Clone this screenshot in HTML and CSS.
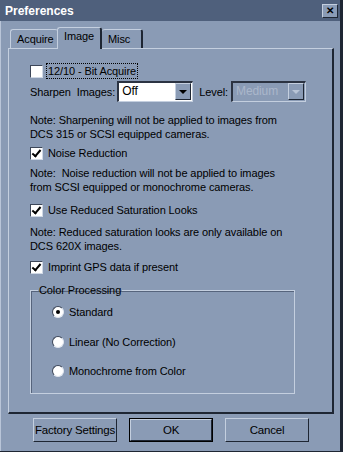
FILE: index.html
```html
<!DOCTYPE html>
<html lang="en">
  <head>
    <meta charset="UTF-8" />
    <title>Preferences</title>
    <link rel="stylesheet" href="styles.css">
  </head>
  <body>
    <div class="window">
      <!-- Title bar -->
      <div class="titlebar">
        <span class="title">Preferences</span>
        <span class="close">&#x2715;</span>
      </div>

      <!-- Tabs -->
      <div class="tabs">
        <div class="tab acquire">Acquire</div>
        <div class="tab active">Image</div>
        <div class="tab misc">Misc</div>
      </div>

      <div class="panel">
        <label class="check first"><span class="box"></span><span class="dotted">12/10 - Bit Acquire</span></label>

        <div class="sharpen-row">
          <span class="lbl">Sharpen&nbsp; Images:</span>
          <div class="combo">
            <span class="value">Off</span>
            <span class="arrow"><span class="tri"></span></span>
          </div>
          <span class="lbl level">Level:</span>
          <div class="combo disabled">
            <span class="value">Medium</span>
            <span class="arrow"><span class="tri"></span></span>
          </div>
        </div>

        <p class="note n1">Note: Sharpening will not be applied to images from<br>DCS 315 or SCSI equipped cameras.</p>

        <label class="check c2"><span class="box checked"></span>Noise Reduction</label>

        <p class="note n2">Note:&nbsp; Noise reduction will not be applied to images<br>from SCSI equipped or monochrome cameras.</p>

        <label class="check c3"><span class="box checked"></span>Use Reduced Saturation Looks</label>

        <p class="note n3">Note: Reduced saturation looks are only available on<br>DCS 620X images.</p>

        <label class="check c4"><span class="box checked"></span>Imprint GPS data if present</label>

        <fieldset class="group">
          <legend>Color Processing</legend>
          <label class="radio"><span class="dot on"></span>Standard</label>
          <label class="radio"><span class="dot"></span>Linear (No Correction)</label>
          <label class="radio"><span class="dot"></span>Monochrome from Color</label>
        </fieldset>
      </div>

      <div class="buttons">
        <div class="btn">Factory Settings</div>
        <div class="btn default"><span class="inner">OK</span></div>
        <div class="btn">Cancel</div>
      </div>
    </div>
  </body>
</html>
```

FILE: styles.css
```css
* {
  margin: 0;
  padding: 0;
  box-sizing: border-box;
}

body {
  font-family: "Liberation Sans", Arial, sans-serif;
  font-size: 11px;
  letter-spacing: -0.1px;
  color: #000;
  background: #8a9bb5;
}

.window {
  width: 343px;
  height: 452px;
  background: #8a9bb5;
  border-right: 3px solid #1e2633;
  border-bottom: 1px solid #1e2633;
  box-shadow: inset 1px 1px 0 #b9c5d8;
}

.titlebar {
  height: 21px;
  background: #4f607c;
  display: flex;
  align-items: center;
  justify-content: space-between;
  padding: 0 2px 0 5px;
}

.title {
  color: #fff;
  font-weight: bold;
  font-size: 12px;
  letter-spacing: 0;
}

.close {
  width: 16px;
  height: 14px;
  background: #8a9bb5;
  border: 1px solid;
  border-color: #c4cfdf #1e2633 #1e2633 #c4cfdf;
  font-size: 10px;
  font-weight: bold;
  line-height: 12px;
  text-align: center;
  color: #000;
}

/* tabs */
.tabs {
  display: flex;
  align-items: flex-end;
  height: 27px;
  padding-left: 10px;
}

.tab {
  height: 19px;
  padding: 3px 0 0 6px;
  border: 1px solid #c4cfdf;
  border-bottom: none;
  border-right: 2px solid #1e2633;
  border-radius: 3px 3px 0 0;
}

.tab.acquire {
  width: 48px;
  border-right: none;
}

.tab.active {
  height: 22px;
  width: 45px;
  padding: 2px 0 0 6px;
  margin: 0 0 -1px -1px;
  background: #8a9bb5;
  position: relative;
  z-index: 1;
}

.tab.misc {
  width: 41px;
  border-left: none;
}

.panel {
  margin: 0 6px 0 8px;
  height: 366px;
  border-style: solid;
  border-color: #c4cfdf #1e2633 #1e2633 #c4cfdf;
  border-width: 1px 2px 2px 1px;
  padding: 14px 0 0 21px;
}

.check {
  display: flex;
  align-items: center;
  height: 16px;
}

.c2 { margin-top: 4px; }
.c3 { margin-top: 8px; }
.c4 { margin-top: 6px; }

.box {
  width: 13px;
  height: 13px;
  background: #fff;
  border: 1px solid;
  border-color: #3c4658 #d0d9e6 #d0d9e6 #3c4658;
  margin-right: 5px;
  position: relative;
}

.box.checked::after {
  content: "";
  position: absolute;
  left: 3px;
  top: 0;
  width: 3px;
  height: 7px;
  border: solid #000;
  border-width: 0 2px 2px 0;
  transform: rotate(40deg);
}

.first .box {
  margin-right: 3px;
}

.dotted {
  border: 1px dotted #000;
  padding: 0 1px;
  line-height: 14px;
}

.sharpen-row {
  display: flex;
  align-items: center;
  margin-top: 2px;
  height: 21px;
}

.lbl {
  margin-right: 2px;
}

.level {
  margin-left: 6px;
  margin-right: 3px;
}

.combo {
  display: flex;
  width: 76px;
  height: 21px;
  background: #fff;
  border-style: solid;
  border-color: #2b3342 #c4cfdf #c4cfdf #2b3342;
  border-width: 2px 1px 1px 2px;
}

.combo .value {
  flex: 1;
  padding-left: 3px;
  line-height: 17px;
  font-size: 12px;
}

.combo .arrow {
  width: 16px;
  margin: 0 1px 1px 0;
  background: #8a9bb5;
  border: 1px solid;
  border-color: #c4cfdf #1e2633 #1e2633 #c4cfdf;
  display: flex;
  align-items: center;
  justify-content: center;
}

.tri {
  width: 0;
  height: 0;
  border-left: 4px solid transparent;
  border-right: 4px solid transparent;
  border-top: 4px solid #000;
}

.combo.disabled {
  width: 75px;
  background: #8a9bb5;
  color: #aab7cb;
}

.combo.disabled .tri {
  border-top-color: #b8c4d6;
}

.note {
  line-height: 14px;
}

.n1 { margin-top: 11px; }
.n2 { margin-top: 5px; }
.n3 { margin-top: 7px; }

.group {
  margin-top: 9px;
  width: 265px;
  height: 110px;
  border: 1px solid #c4cfdf;
  box-shadow: inset 1px 1px 0 #56647c;
  padding: 8px 0 0 21px;
}

.group legend {
  margin-left: -14px;
  padding: 0 1px;
  line-height: 12px;
}

.radio {
  display: flex;
  align-items: center;
  height: 16px;
  margin-bottom: 14px;
}

.radio:nth-of-type(2) {
  margin-bottom: 13px;
}

.dot {
  width: 12px;
  height: 12px;
  border-radius: 50%;
  background: #fff;
  border: 1px solid;
  border-color: #3c4658 #e0e6ef #e0e6ef #3c4658;
  margin-right: 5px;
  position: relative;
}

.dot.on::after {
  content: "";
  position: absolute;
  left: 3px;
  top: 3px;
  width: 4px;
  height: 4px;
  border-radius: 50%;
  background: #000;
}

.buttons {
  display: flex;
  padding: 4px 0 0 33px;
  gap: 12px;
}

.btn {
  width: 84px;
  height: 24px;
  border: 1px solid;
  border-color: #c4cfdf #1e2633 #1e2633 #c4cfdf;
  text-align: center;
  line-height: 22px;
  font-size: 11.5px;
  letter-spacing: -0.2px;
  white-space: nowrap;
}

.btn.default {
  border: 1px solid #000;
  padding: 0;
}

.btn.default .inner {
  display: block;
  height: 100%;
  border: 1px solid;
  border-color: #c4cfdf #1e2633 #1e2633 #c4cfdf;
  line-height: 20px;
}
```
